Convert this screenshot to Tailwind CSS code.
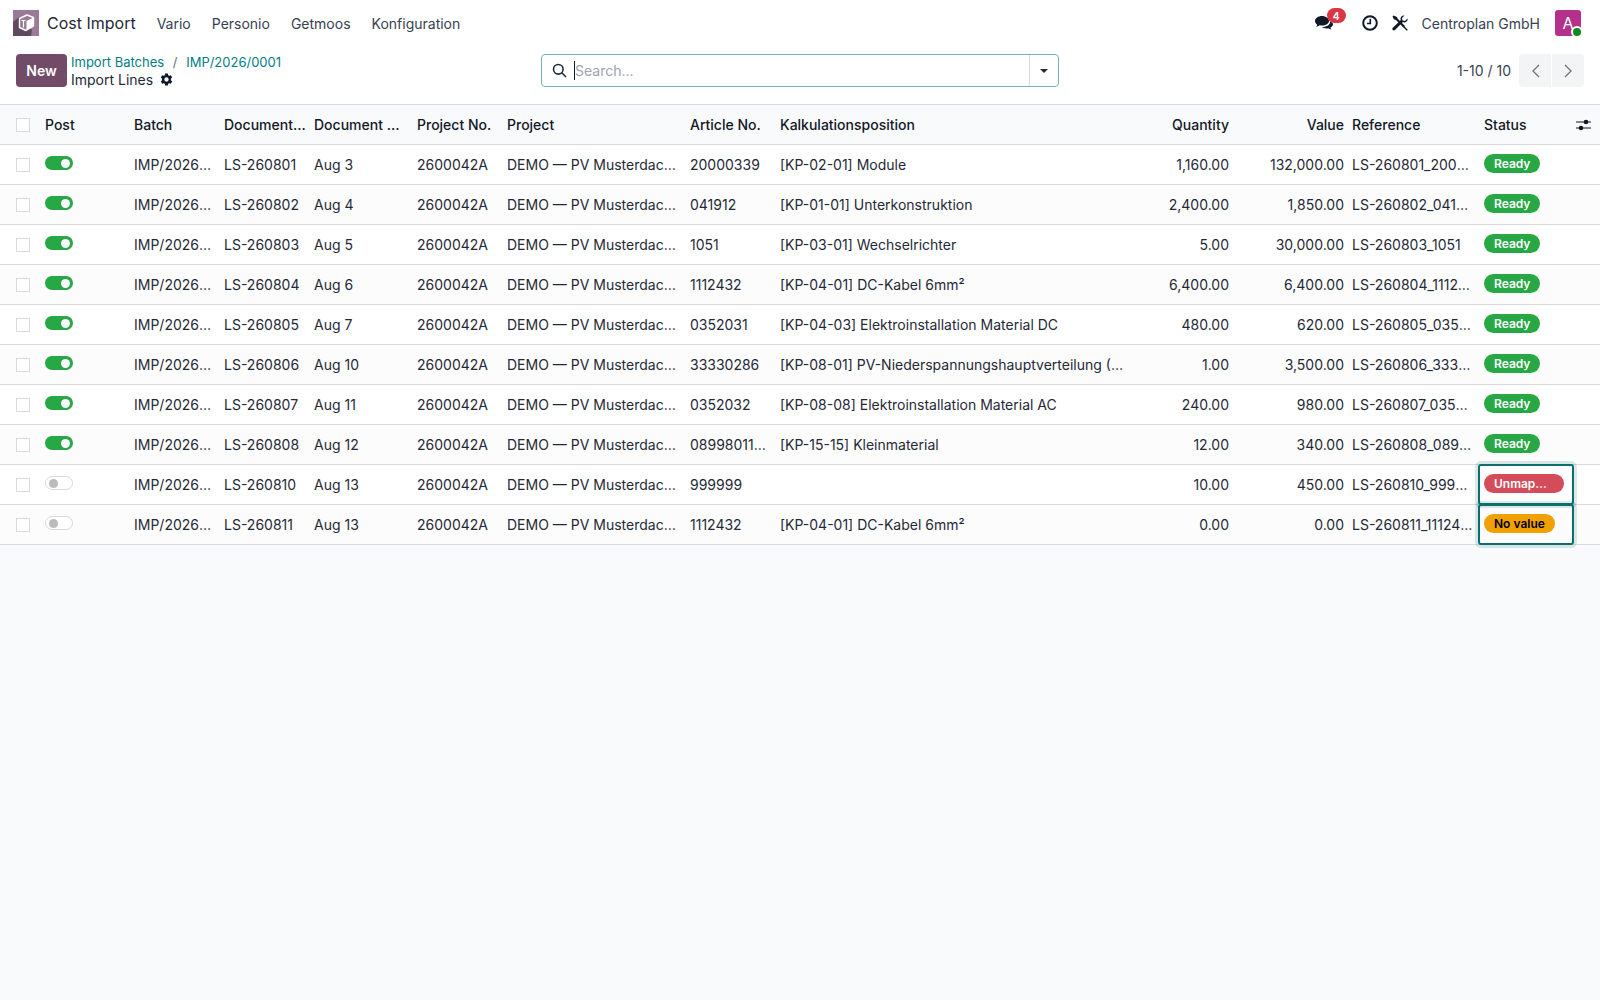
<!DOCTYPE html>
<html lang="en">
<head>
<meta charset="UTF-8">
<title>Cost Import</title>
<script src="https://cdn.jsdelivr.net/npm/@tailwindcss/browser@4"></script>
</head>
<body class="min-h-screen bg-[#f9fafb] font-['Inter',sans-serif] text-[14px] text-[#374151]">

<!-- navbar -->
<header class="flex h-[46px] items-center bg-white pl-[13px] pr-[19px]">
  <svg class="h-[26px] w-[26px] shrink-0" viewBox="0 0 26 26">
    <rect width="26" height="26" fill="#9a7a96"/>
    <path d="M0 26V12L6 7l13 13-1 6z" fill="#5f4a60"/>
    <path d="M6.5 8.5 14 5l6.5 2.5v8.5L13 20.500l-6.500-3z" fill="#9a7a96" stroke="#fff" stroke-width="1.400" stroke-linejoin="round"/>
    <path d="M13.500 11 20.500 7.500v8.500L13.500 20.500z" fill="#fff"/>
    <path d="M8.500 10.500h4M10.500 10.500v7" stroke="#fff" stroke-width="1.200" fill="none"/>
  </svg>
  <span class="ml-[8px] text-[16px] leading-none text-[#1f2937]">Cost Import</span>
  <nav class="ml-[21px] flex gap-[21px]">
    <span>Vario</span><span>Personio</span><span>Getmoos</span><span>Konfiguration</span>
  </nav>
  <div class="ml-auto flex items-center">
    <div class="relative h-[20px] w-[31px]">
      <svg class="absolute left-0 top-[2px] h-[16px] w-[18px]" viewBox="0 0 18 16" fill="#111827">
        <path d="M7 1C3.200 1 0 3.200 0 6c0 1.500.9 2.800 2.300 3.700-.2.800-.7 1.500-1.300 2 1.400-.1 2.700-.6 3.700-1.400.7.200 1.500.3 2.300.3 3.800 0 7-2.200 7-4.600S10.800 1 7 1z"/>
        <path d="M15.200 6.500c.1 3-3.300 5.500-7.700 5.500h-.8c1.200.9 2.900 1.400 4.800 1.400.6 0 1.100-.1 1.600-.2.9.7 2 1.100 3.400 1.200-.6-.5-1-1.100-1.200-1.800 1.700-.8 2.700-2 2.700-3.300 0-1.100-1.100-2.200-2.800-2.800z"/>
      </svg>
      <span class="absolute right-0 top-[-5px] flex h-[15px] w-[19px] items-center justify-center rounded-full bg-[#dc3545] text-[10px] font-bold leading-none text-white">4</span>
    </div>
    <svg class="ml-[16px] h-[16px] w-[16px]" viewBox="0 0 16 16" fill="none" stroke="#111827">
      <circle cx="8" cy="8" r="6.800" stroke-width="2"/>
      <path d="M8.300 3.800V8.500H5" stroke-width="1.600"/>
    </svg>
    <svg class="ml-[14px] h-[16px] w-[16px]" viewBox="0 0 16 16" fill="#111827">
      <path d="M1.500 0.500 0.500 1.500 2 4.500l2 .5 7.500 7.500 1.500-1.500L5.500 3.500 5 2z" />
      <path d="M15.500 3.500 13 6l-2.500-.5L10 3l2.500-2.500C10.500 0 8.500 1.500 8.500 3.500c0 .6.100 1 .3 1.400L.8 12.800c-.7.700-.7 1.600 0 2.200.6.600 1.500.6 2.200 0l7.900-7.900c.4.200.9.300 1.400.3 2.200 0 3.800-1.900 3.200-3.900z"/>
      <path d="M10.500 9.500l5 5c.5.600-.4 1.500-1 1l-5-5z"/>
    </svg>
    <span class="ml-[14px] whitespace-nowrap">Centroplan GmbH</span>
    <div class="relative ml-[15px] flex h-[26px] w-[26px] items-center justify-center rounded-[3px] bg-[#b5308a] text-[16px] text-white">A
      <span class="absolute bottom-[-2px] right-[-2px] h-[12px] w-[12px] rounded-full border-2 border-white bg-[#0a8a1f]"></span>
    </div>
  </div>
</header>

<!-- control panel -->
<div class="relative flex h-[58px] items-start bg-white pl-[16px] pr-[16px] pt-[8px]">
  <button class="h-[33px] w-[51px] rounded-[4px] bg-[#714b67] text-[14px] font-semibold text-white">New</button>
  <div class="ml-[4px] leading-[17px]">
    <div class="text-[13px] text-[#017e84]">Import Batches <span class="mx-[5px] text-[#6b7280]">/</span> IMP/2026/0001</div>
    <div class="flex items-center text-[#1f2937]">Import Lines
      <svg class="ml-[7px] h-[13px] w-[13px]" viewBox="0 0 24 24" fill="#111827"><path fill-rule="evenodd" d="M14.500 1h-5l-.6 3.100c-.7.300-1.300.6-1.900 1.100L4 4.100 1.500 8.400 3.900 10.500a8 8 0 0 0 0 3L1.500 15.600 4 19.900l3-1.100c.6.500 1.200.8 1.900 1.100L9.500 23h5l.6-3.100c.7-.3 1.300-.6 1.900-1.100l3 1.100 2.500-4.300-2.400-2.100a8 8 0 0 0 0-3l2.400-2.100L20 4.100l-3 1.100c-.6-.5-1.200-.8-1.900-1.100zM12 8a4 4 0 1 1 0 8 4 4 0 0 1 0-8z"/></svg>
    </div>
  </div>
  <div class="absolute left-[541px] top-[8px] flex h-[33px] w-[518px] items-center rounded-[4px] border border-[#6fb5bb] bg-white">
    <svg class="ml-[10px] h-[15px] w-[15px]" viewBox="0 0 15 15" fill="none" stroke="#1f2937" stroke-width="1.600"><circle cx="6.300" cy="6.300" r="4.800"/><path d="M9.800 9.800 14 14"/></svg>
    <span class="ml-[7px] h-[19px] w-px bg-[#111827]"></span>
    <span class="text-[14px] text-[#9ca3af]">Search...</span>
    <span class="ml-auto flex h-full w-[29px] items-center justify-center border-l border-[#d8dadd]">
      <span class="h-0 w-0 border-x-[4px] border-t-[4px] border-x-transparent border-t-[#1f2937]"></span>
    </span>
  </div>
  <div class="ml-auto flex items-center">
    <span class="mr-[8px]">1-10 / 10</span>
    <span class="flex h-[33px] w-[32px] items-center justify-center rounded-l-[4px] bg-[#f3f4f6]"><svg class="h-[14px] w-[9px]" viewBox="0 0 9 14" fill="none" stroke="#6b7280" stroke-width="1.300"><path d="M8 1 2 7l6 6"/></svg></span>
    <span class="ml-px flex h-[33px] w-[32px] items-center justify-center rounded-r-[4px] bg-[#f3f4f6]"><svg class="h-[14px] w-[9px]" viewBox="0 0 9 14" fill="none" stroke="#6b7280" stroke-width="1.300"><path d="M1 1l6 6-6 6"/></svg></span>
  </div>
</div>

<!-- list -->
<table class="w-full table-fixed border-t border-[#d8dadd] [&_td]:truncate [&_td]:px-[4px] [&_td]:text-[#1f2937] [&_th]:truncate [&_th]:px-[4px] [&_th]:text-left [&_th]:font-medium [&_th]:text-[#111827]">
  <colgroup>
    <col class="w-[41px]"><col class="w-[89px]"><col class="w-[90px]"><col class="w-[90px]"><col class="w-[103px]"><col class="w-[90px]"><col class="w-[183px]"><col class="w-[90px]"><col class="w-[357px]"><col class="w-[100px]"><col class="w-[115px]"><col class="w-[132px]"><col class="w-[92px]"><col class="w-[28px]">
  </colgroup>
  <thead>
    <tr class="h-[40px] border-b border-[#d8dadd] bg-[#f9fafb]">
      <th><span class="ml-[12px] block h-[14px] w-[14px] border border-[#d8dadd] bg-white"></span></th>
      <th>Post</th><th>Batch</th><th>Document No.</th><th>Document Date</th><th>Project No.</th><th>Project</th><th>Article No.</th><th>Kalkulationsposition</th>
      <th class="!text-right">Quantity</th><th class="!text-right">Value</th><th>Reference</th><th>Status</th>
      <th><svg class="h-[12px] w-[15px]" viewBox="0 0 15 12" fill="#111827"><path d="M0 2.500h15v1H0zM0 8.500h15v1H0z"/><circle cx="10" cy="3" r="2.300"/><circle cx="5" cy="9" r="2.300"/></svg></th>
    </tr>
  </thead>
  <tbody class="[&_tr]:h-[40px] [&_tr]:border-b [&_tr]:border-[#d8dadd] [&_tr:nth-child(odd)]:bg-white [&_tr:nth-child(even)]:bg-[#fcfcfc]">
    <tr>
      <td><span class="ml-[12px] block h-[14px] w-[14px] border border-[#d8dadd] bg-white"></span></td>
      <td><span class="relative mt-[-3px] block h-[14px] w-[28px] rounded-full bg-[#28a745]"><span class="absolute right-[3px] top-[2.500px] h-[9px] w-[9px] rounded-full bg-white"></span></span></td>
      <td>IMP/2026/0001</td><td>LS-260801</td><td>Aug 3</td><td>2600042A</td><td>DEMO — PV Musterdachanlage</td><td>20000339</td><td>[KP-02-01] Module</td>
      <td class="text-right">1,160.00</td><td class="text-right">132,000.00</td><td>LS-260801_20000339</td>
      <td><span class="mt-[-3px] block w-fit rounded-full bg-[#28a745] px-[10px] text-[12px] font-semibold leading-[19px] text-white">Ready</span></td><td></td>
    </tr>
    <tr>
      <td><span class="ml-[12px] block h-[14px] w-[14px] border border-[#d8dadd] bg-white"></span></td>
      <td><span class="relative mt-[-3px] block h-[14px] w-[28px] rounded-full bg-[#28a745]"><span class="absolute right-[3px] top-[2.500px] h-[9px] w-[9px] rounded-full bg-white"></span></span></td>
      <td>IMP/2026/0001</td><td>LS-260802</td><td>Aug 4</td><td>2600042A</td><td>DEMO — PV Musterdachanlage</td><td>041912</td><td>[KP-01-01] Unterkonstruktion</td>
      <td class="text-right">2,400.00</td><td class="text-right">1,850.00</td><td>LS-260802_041912</td>
      <td><span class="mt-[-3px] block w-fit rounded-full bg-[#28a745] px-[10px] text-[12px] font-semibold leading-[19px] text-white">Ready</span></td><td></td>
    </tr>
    <tr>
      <td><span class="ml-[12px] block h-[14px] w-[14px] border border-[#d8dadd] bg-white"></span></td>
      <td><span class="relative mt-[-3px] block h-[14px] w-[28px] rounded-full bg-[#28a745]"><span class="absolute right-[3px] top-[2.500px] h-[9px] w-[9px] rounded-full bg-white"></span></span></td>
      <td>IMP/2026/0001</td><td>LS-260803</td><td>Aug 5</td><td>2600042A</td><td>DEMO — PV Musterdachanlage</td><td>1051</td><td>[KP-03-01] Wechselrichter</td>
      <td class="text-right">5.00</td><td class="text-right">30,000.00</td><td>LS-260803_1051</td>
      <td><span class="mt-[-3px] block w-fit rounded-full bg-[#28a745] px-[10px] text-[12px] font-semibold leading-[19px] text-white">Ready</span></td><td></td>
    </tr>
    <tr>
      <td><span class="ml-[12px] block h-[14px] w-[14px] border border-[#d8dadd] bg-white"></span></td>
      <td><span class="relative mt-[-3px] block h-[14px] w-[28px] rounded-full bg-[#28a745]"><span class="absolute right-[3px] top-[2.500px] h-[9px] w-[9px] rounded-full bg-white"></span></span></td>
      <td>IMP/2026/0001</td><td>LS-260804</td><td>Aug 6</td><td>2600042A</td><td>DEMO — PV Musterdachanlage</td><td>1112432</td><td>[KP-04-01] DC-Kabel 6mm²</td>
      <td class="text-right">6,400.00</td><td class="text-right">6,400.00</td><td>LS-260804_1112432</td>
      <td><span class="mt-[-3px] block w-fit rounded-full bg-[#28a745] px-[10px] text-[12px] font-semibold leading-[19px] text-white">Ready</span></td><td></td>
    </tr>
    <tr>
      <td><span class="ml-[12px] block h-[14px] w-[14px] border border-[#d8dadd] bg-white"></span></td>
      <td><span class="relative mt-[-3px] block h-[14px] w-[28px] rounded-full bg-[#28a745]"><span class="absolute right-[3px] top-[2.500px] h-[9px] w-[9px] rounded-full bg-white"></span></span></td>
      <td>IMP/2026/0001</td><td>LS-260805</td><td>Aug 7</td><td>2600042A</td><td>DEMO — PV Musterdachanlage</td><td>0352031</td><td>[KP-04-03] Elektroinstallation Material DC</td>
      <td class="text-right">480.00</td><td class="text-right">620.00</td><td>LS-260805_0352031</td>
      <td><span class="mt-[-3px] block w-fit rounded-full bg-[#28a745] px-[10px] text-[12px] font-semibold leading-[19px] text-white">Ready</span></td><td></td>
    </tr>
    <tr>
      <td><span class="ml-[12px] block h-[14px] w-[14px] border border-[#d8dadd] bg-white"></span></td>
      <td><span class="relative mt-[-3px] block h-[14px] w-[28px] rounded-full bg-[#28a745]"><span class="absolute right-[3px] top-[2.500px] h-[9px] w-[9px] rounded-full bg-white"></span></span></td>
      <td>IMP/2026/0001</td><td>LS-260806</td><td>Aug 10</td><td>2600042A</td><td>DEMO — PV Musterdachanlage</td><td>33330286</td><td>[KP-08-01] PV-Niederspannungshauptverteilung (PV-NSHV)</td>
      <td class="text-right">1.00</td><td class="text-right">3,500.00</td><td>LS-260806_33330286</td>
      <td><span class="mt-[-3px] block w-fit rounded-full bg-[#28a745] px-[10px] text-[12px] font-semibold leading-[19px] text-white">Ready</span></td><td></td>
    </tr>
    <tr>
      <td><span class="ml-[12px] block h-[14px] w-[14px] border border-[#d8dadd] bg-white"></span></td>
      <td><span class="relative mt-[-3px] block h-[14px] w-[28px] rounded-full bg-[#28a745]"><span class="absolute right-[3px] top-[2.500px] h-[9px] w-[9px] rounded-full bg-white"></span></span></td>
      <td>IMP/2026/0001</td><td>LS-260807</td><td>Aug 11</td><td>2600042A</td><td>DEMO — PV Musterdachanlage</td><td>0352032</td><td>[KP-08-08] Elektroinstallation Material AC</td>
      <td class="text-right">240.00</td><td class="text-right">980.00</td><td>LS-260807_0352032</td>
      <td><span class="mt-[-3px] block w-fit rounded-full bg-[#28a745] px-[10px] text-[12px] font-semibold leading-[19px] text-white">Ready</span></td><td></td>
    </tr>
    <tr>
      <td><span class="ml-[12px] block h-[14px] w-[14px] border border-[#d8dadd] bg-white"></span></td>
      <td><span class="relative mt-[-3px] block h-[14px] w-[28px] rounded-full bg-[#28a745]"><span class="absolute right-[3px] top-[2.500px] h-[9px] w-[9px] rounded-full bg-white"></span></span></td>
      <td>IMP/2026/0001</td><td>LS-260808</td><td>Aug 12</td><td>2600042A</td><td>DEMO — PV Musterdachanlage</td><td>08998011234</td><td>[KP-15-15] Kleinmaterial</td>
      <td class="text-right">12.00</td><td class="text-right">340.00</td><td>LS-260808_08998011234</td>
      <td><span class="mt-[-3px] block w-fit rounded-full bg-[#28a745] px-[10px] text-[12px] font-semibold leading-[19px] text-white">Ready</span></td><td></td>
    </tr>
    <tr>
      <td><span class="ml-[12px] block h-[14px] w-[14px] border border-[#d8dadd] bg-white"></span></td>
      <td><span class="relative mt-[-3px] block h-[14px] w-[28px] rounded-full border border-[#d8dadd] bg-white"><span class="absolute left-[3px] top-[1.500px] h-[9px] w-[9px] rounded-full bg-[#bbbbbb]"></span></span></td>
      <td>IMP/2026/0001</td><td>LS-260810</td><td>Aug 13</td><td>2600042A</td><td>DEMO — PV Musterdachanlage</td><td>999999</td><td></td>
      <td class="text-right">10.00</td><td class="text-right">450.00</td><td>LS-260810_999999</td>
      <td class="relative !overflow-visible"><span class="mt-[-3px] block w-[80px] truncate rounded-full bg-[#d44c59] px-[10px] text-[12px] font-semibold leading-[19px] text-white">Unmapped</span>
        <span class="absolute inset-x-[-2px] inset-y-[-1px] rounded-[3px] border-2 border-[#0d6e6e] shadow-[0_0_0_3px_rgba(13,110,110,0.15)]"></span></td><td></td>
    </tr>
    <tr>
      <td><span class="ml-[12px] block h-[14px] w-[14px] border border-[#d8dadd] bg-white"></span></td>
      <td><span class="relative mt-[-3px] block h-[14px] w-[28px] rounded-full border border-[#d8dadd] bg-white"><span class="absolute left-[3px] top-[1.500px] h-[9px] w-[9px] rounded-full bg-[#bbbbbb]"></span></span></td>
      <td>IMP/2026/0001</td><td>LS-260811</td><td>Aug 13</td><td>2600042A</td><td>DEMO — PV Musterdachanlage</td><td>1112432</td><td>[KP-04-01] DC-Kabel 6mm²</td>
      <td class="text-right">0.00</td><td class="text-right">0.00</td><td>LS-260811_1112432</td>
      <td class="relative !overflow-visible"><span class="mt-[-3px] block w-fit rounded-full bg-[#f0a000] px-[10px] text-[12px] font-semibold leading-[19px] !text-black">No value</span>
        <span class="absolute inset-x-[-2px] inset-y-[-1px] rounded-[3px] border-2 border-[#0d6e6e] shadow-[0_0_0_3px_rgba(13,110,110,0.15)]"></span></td><td></td>
    </tr>
  </tbody>
</table>
</body>
</html>
